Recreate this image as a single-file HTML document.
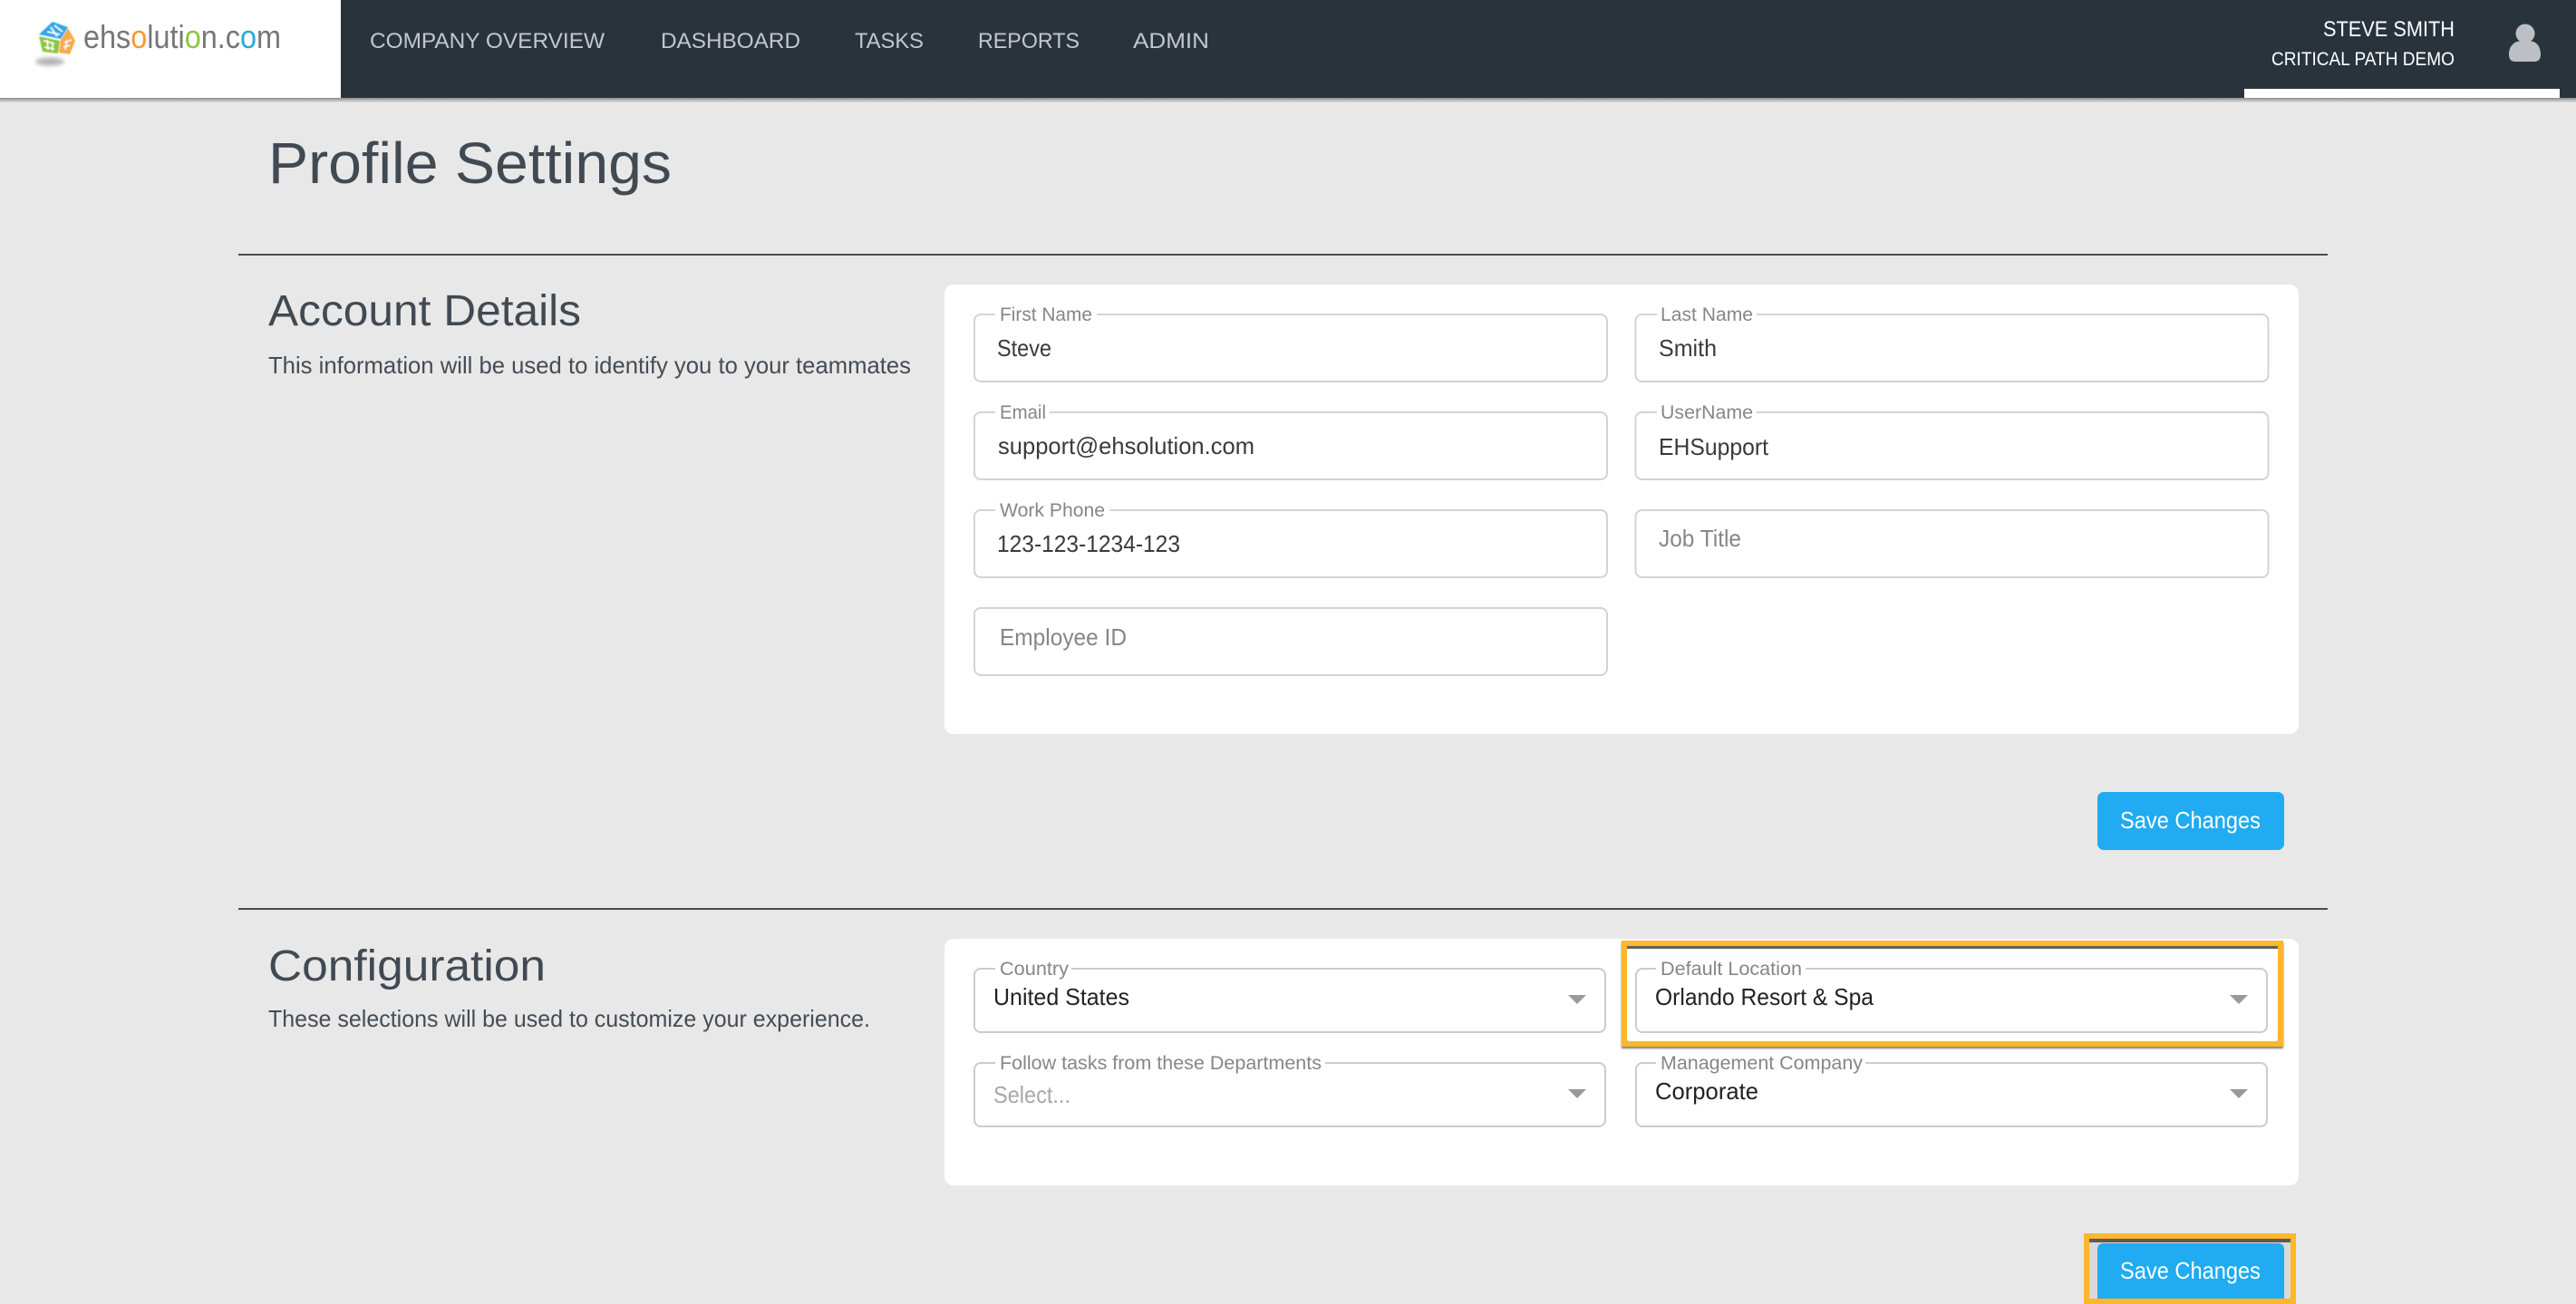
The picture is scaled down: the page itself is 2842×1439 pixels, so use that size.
<!DOCTYPE html>
<html lang="en"><head><meta charset="utf-8"><title>Profile Settings</title>
<style>
html,body{margin:0;padding:0;background:#e8e8e8;width:2842px;height:1439px;overflow:hidden}
svg{display:block}
text{font-family:"Liberation Sans",Arial,sans-serif}
.nav{font-size:24px;fill:#c3c7cb}
.u1{font-size:24px;fill:#fff}
.u2{font-size:21px;fill:#fff}
.h{fill:#414a53}
.p{font-size:26px;fill:#444c55}
.lb{font-size:21px;fill:#86868a}
.v{font-size:26px;fill:#3a3a3a}
.sv{font-size:26px;fill:#222}
.ph{font-size:26px;fill:#86868a}
.sp{font-size:26px;fill:#a8a8a8}
.btn{font-size:26px;fill:#fff}
.f{fill:#fff;stroke:#d0d4d9;stroke-width:2}
.s{fill:#fff;stroke:#cbcbcb;stroke-width:2}
.ar{fill:#999}
</style></head><body>
<svg width="2842" height="1439" viewBox="0 0 2842 1439" xmlns="http://www.w3.org/2000/svg">
<defs>
<linearGradient id="hs" x1="0" y1="0" x2="0" y2="1"><stop offset="0" stop-color="#8c8c8c"/><stop offset="1" stop-color="#e0e0e0"/></linearGradient>
<filter id="b1"><feGaussianBlur stdDeviation="0.6"/></filter>
<filter id="b2" x="-30%" y="-80%" width="160%" height="260%"><feGaussianBlur stdDeviation="2.4"/></filter>
<filter id="b3" x="-5%" y="-20%" width="110%" height="140%"><feGaussianBlur stdDeviation="1"/></filter>
</defs>
<rect width="2842" height="1439" fill="#e8e8e8"/>

<!-- header -->
<rect width="2842" height="108" fill="#29333c"/>
<rect width="376" height="108" fill="#fff"/>
<rect y="108" width="2842" height="5" fill="url(#hs)"/>
<ellipse cx="55" cy="68" rx="16" ry="4.5" fill="#b4b4b4" filter="url(#b2)"/>
<g filter="url(#b1)">
<polygon points="43,38 58,24 75,30 67,43" fill="#2fa9e6"/>
<polygon points="75,31 83,45 77,60 65,58 67,44" fill="#f8a94a"/>
<polygon points="43,40 66,45 64,59 47,57" fill="#8cc63f"/>
<path d="M52,35 L66,38 M56,30 L63,40 M60,28 L69,35" stroke="#fff" stroke-width="1.6" fill="none"/>
<path d="M71,47 L79,44 M70,52 L77,50 M74,44 L72,55" stroke="#fff" stroke-width="1.6" fill="none"/>
<path d="M48,45 L60,48 M49,52 L60,54 M52,44 L53,55 M58,47 L58,56" stroke="#fff" stroke-width="1.6" fill="none"/>
</g>
<text x="92" y="53" font-size="36" fill="#76777a" textLength="218" lengthAdjust="spacingAndGlyphs">ehs<tspan fill="#f79a2e">o</tspan>luti<tspan fill="#8cc63f">o</tspan>n.c<tspan fill="#27aae1">o</tspan>m</text>

<text class="nav" x="408" y="53" textLength="259" lengthAdjust="spacingAndGlyphs">COMPANY OVERVIEW</text>
<text class="nav" x="729" y="53" textLength="154" lengthAdjust="spacingAndGlyphs">DASHBOARD</text>
<text class="nav" x="943" y="53" textLength="76" lengthAdjust="spacingAndGlyphs">TASKS</text>
<text class="nav" x="1079" y="53" textLength="112" lengthAdjust="spacingAndGlyphs">REPORTS</text>
<text class="nav" x="1250" y="53" textLength="84" lengthAdjust="spacingAndGlyphs">ADMIN</text>

<text class="u1" x="2563" y="40" textLength="145" lengthAdjust="spacingAndGlyphs">STEVE SMITH</text>
<text class="u2" x="2506" y="72" textLength="202" lengthAdjust="spacingAndGlyphs">CRITICAL PATH DEMO</text>
<circle cx="2786" cy="37" r="10.5" fill="#bcc0c4"/>
<path d="M2768 60 C2768 51 2774 45.5 2780 45.5 Q2786 48.5 2792 45.5 C2798 45.5 2803 51 2803 60 Q2803 68 2796 68 L2775 68 Q2768 68 2768 60 Z" fill="#bcc0c4"/>
<rect x="2476" y="98" width="348" height="10" fill="#fff"/>

<!-- title -->
<text class="h" x="296" y="202" font-size="64" textLength="445" lengthAdjust="spacingAndGlyphs">Profile Settings</text>
<rect x="263" y="280" width="2305" height="2" fill="#454c54"/>

<!-- account -->
<text class="h" x="296" y="359" font-size="48" textLength="345" lengthAdjust="spacingAndGlyphs">Account Details</text>
<text class="p" x="296" y="412" textLength="709" lengthAdjust="spacingAndGlyphs">This information will be used to identify you to your teammates</text>
<rect x="1042" y="314" width="1494" height="496" rx="10" fill="#fff"/>

<rect class="f" x="1075" y="347" width="698" height="74" rx="7"/>
<rect x="1098" y="340" width="112" height="14" fill="#fff"/>
<text class="lb" x="1103" y="354" textLength="102" lengthAdjust="spacingAndGlyphs">First Name</text>
<text class="v" x="1100" y="393" textLength="60" lengthAdjust="spacingAndGlyphs">Steve</text>

<rect class="f" x="1804.5" y="347" width="698" height="74" rx="7"/>
<rect x="1828" y="340" width="110" height="14" fill="#fff"/>
<text class="lb" x="1832" y="354" textLength="102" lengthAdjust="spacingAndGlyphs">Last Name</text>
<text class="v" x="1830" y="393" textLength="64" lengthAdjust="spacingAndGlyphs">Smith</text>

<rect class="f" x="1075" y="455" width="698" height="74" rx="7"/>
<rect x="1098" y="448" width="60" height="14" fill="#fff"/>
<text class="lb" x="1103" y="462" textLength="51" lengthAdjust="spacingAndGlyphs">Email</text>
<text class="v" x="1101" y="501" textLength="283" lengthAdjust="spacingAndGlyphs">support@ehsolution.com</text>

<rect class="f" x="1804.5" y="455" width="698" height="74" rx="7"/>
<rect x="1828" y="448" width="110" height="14" fill="#fff"/>
<text class="lb" x="1832" y="462" textLength="102" lengthAdjust="spacingAndGlyphs">UserName</text>
<text class="v" x="1830" y="502" textLength="121" lengthAdjust="spacingAndGlyphs">EHSupport</text>

<rect class="f" x="1075" y="563" width="698" height="74" rx="7"/>
<rect x="1098" y="556" width="126" height="14" fill="#fff"/>
<text class="lb" x="1103" y="570" textLength="116" lengthAdjust="spacingAndGlyphs">Work Phone</text>
<text class="v" x="1100" y="609" textLength="202" lengthAdjust="spacingAndGlyphs">123-123-1234-123</text>

<rect class="f" x="1804.5" y="563" width="698" height="74" rx="7"/>
<text class="ph" x="1830" y="603" textLength="91" lengthAdjust="spacingAndGlyphs">Job Title</text>

<rect class="f" x="1075" y="671" width="698" height="74" rx="7"/>
<text class="ph" x="1103" y="712" textLength="140" lengthAdjust="spacingAndGlyphs">Employee ID</text>

<rect x="2314" y="874" width="206" height="64" rx="7" fill="#20abf2"/>
<text class="btn" x="2339" y="914" textLength="155" lengthAdjust="spacingAndGlyphs">Save Changes</text>

<!-- configuration -->
<rect x="263" y="1002" width="2305" height="2" fill="#454c54"/>
<text class="h" x="296" y="1082" font-size="48" textLength="306" lengthAdjust="spacingAndGlyphs">Configuration</text>
<text class="p" x="296" y="1133" textLength="664" lengthAdjust="spacingAndGlyphs">These selections will be used to customize your experience.</text>
<rect x="1042" y="1036" width="1494" height="272" rx="10" fill="#fff"/>

<rect class="s" x="1075" y="1069" width="696" height="70" rx="7"/>
<rect x="1098" y="1062" width="84" height="14" fill="#fff"/>
<text class="lb" x="1103" y="1076" textLength="76" lengthAdjust="spacingAndGlyphs">Country</text>
<text class="sv" x="1096" y="1109" textLength="150" lengthAdjust="spacingAndGlyphs">United States</text>
<polygon class="ar" points="1730,1098 1750,1098 1740,1108"/>

<rect class="s" x="1075" y="1173" width="696" height="70" rx="7"/>
<rect x="1098" y="1166" width="364" height="14" fill="#fff"/>
<text class="lb" x="1103" y="1180" textLength="355" lengthAdjust="spacingAndGlyphs">Follow tasks from these Departments</text>
<text class="sp" x="1096" y="1217" textLength="85" lengthAdjust="spacingAndGlyphs">Select...</text>
<polygon class="ar" points="1730,1202 1750,1202 1740,1212"/>

<!-- highlight 1 -->
<rect x="1792" y="1043" width="724" height="111" fill="none" stroke="#4a4a4a" stroke-width="6" filter="url(#b3)" opacity=".75"/>
<rect x="1795" y="1046" width="718" height="101" fill="#fff"/>
<rect x="1795" y="1044" width="718" height="3" fill="#5f5f5f"/>
<rect x="1792" y="1041" width="724" height="111" fill="none" stroke="#fdb72b" stroke-width="6"/>

<rect class="s" x="1805" y="1069" width="696" height="70" rx="7"/>
<rect x="1827" y="1062" width="165" height="14" fill="#fff"/>
<text class="lb" x="1832" y="1076" textLength="156" lengthAdjust="spacingAndGlyphs">Default Location</text>
<text class="sv" x="1826" y="1109" textLength="241" lengthAdjust="spacingAndGlyphs">Orlando Resort &amp; Spa</text>
<polygon class="ar" points="2460,1098 2480,1098 2470,1108"/>

<rect class="s" x="1805" y="1173" width="696" height="70" rx="7"/>
<rect x="1827" y="1166" width="231" height="14" fill="#fff"/>
<text class="lb" x="1832" y="1180" textLength="223" lengthAdjust="spacingAndGlyphs">Management Company</text>
<text class="sv" x="1826" y="1213" textLength="114" lengthAdjust="spacingAndGlyphs">Corporate</text>
<polygon class="ar" points="2460,1202 2480,1202 2470,1212"/>

<!-- highlight 2 -->
<rect x="2305" y="1367" width="222" height="66" fill="#d9d9d9"/>
<rect x="2305" y="1367" width="222" height="4" fill="#5a5a5a"/>
<path d="M2321 1372 H2513 Q2520 1372 2520 1379 V1434 H2314 V1379 Q2314 1372 2321 1372 Z" fill="#20abf2"/>
<text class="btn" x="2339" y="1411" textLength="155" lengthAdjust="spacingAndGlyphs">Save Changes</text>
<rect x="2302" y="1364" width="228" height="72" fill="none" stroke="#fdb72b" stroke-width="6"/>
</svg>
</body></html>
